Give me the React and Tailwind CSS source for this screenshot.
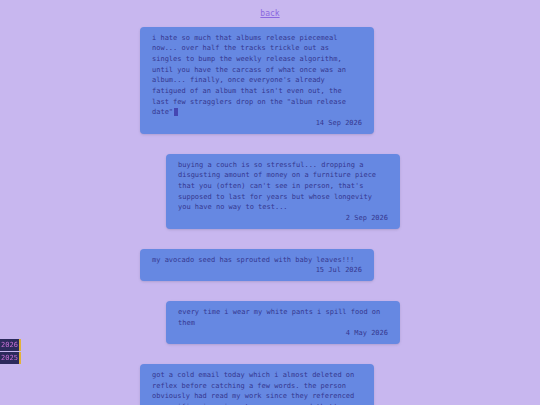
const posts = [
  {
    id: 1,
    text: 'i hate so much that albums release piecemeal now... over half the tracks trickle out as singles to bump the weekly release algorithm, until you have the carcass of what once was an album... finally, once everyone\'s already fatigued of an album that isn\'t even out, the last few stragglers drop on the "album release date"',
    date: '14 Sep 2026',
    cursor: true,
  },
  {
    id: 2,
    text: "buying a couch is so stressful... dropping a disgusting amount of money on a furniture piece that you (often) can't see in person, that's supposed to last for years but whose longevity you have no way to test...",
    date: '2 Sep 2026',
  },
  {
    id: 3,
    text: 'my avocado seed has sprouted with baby leaves!!!',
    date: '15 Jul 2026',
  },
  {
    id: 4,
    text: 'every time i wear my white pants i spill food on them',
    date: '4 May 2026',
  },
  {
    id: 5,
    text: "got a cold email today which i almost deleted on reflex before catching a few words. the person obviously had read my work since they referenced a specific piece i wrote years ago and that's just so nice to hear",
    date: '11 Apr 2026',
  },
];

const years = ['2026', '2025'];

export default function App() {
  return (
    <div className="min-h-screen bg-[#c8b7ef] font-['DejaVu_Sans_Mono',monospace] text-[#35378f]">
      <nav className="fixed left-0 top-[339px] flex flex-col gap-px">
        {years.map((y) => (
          <span
            key={y}
            className="block w-[21px] border-r-2 border-[#e2b23a] bg-[#2c2a5c] text-center text-[7px] leading-[12px] text-[#c772d6]"
          >
            {y}
          </span>
        ))}
      </nav>

      <main className="mx-auto w-[260px] pt-2 pb-8">
        <div className="mb-[7px] text-center text-[8px] leading-[12px]">
          <a href="#" className="text-[#8a68e0] underline">
            back
          </a>
        </div>

        <div className="flex flex-col gap-5">
          {posts.map((post, i) => (
            <article
              key={post.id}
              className={`w-[234px] rounded-sm bg-[#6688e2] px-3 py-[5.5px] shadow-sm ${
                i % 2 === 1 ? 'self-end' : 'self-start'
              }`}
            >
              <p className="text-[7px] leading-[10.67px] whitespace-pre-wrap">
                {post.text}
                {post.cursor && (
                  <span className="ml-px inline-block h-[8px] w-[4px] align-[-2px] bg-[#4547b2]" />
                )}
              </p>
              <div className="text-right text-[7px] leading-[10.67px]">{post.date}</div>
            </article>
          ))}
        </div>
      </main>
    </div>
  );
}
